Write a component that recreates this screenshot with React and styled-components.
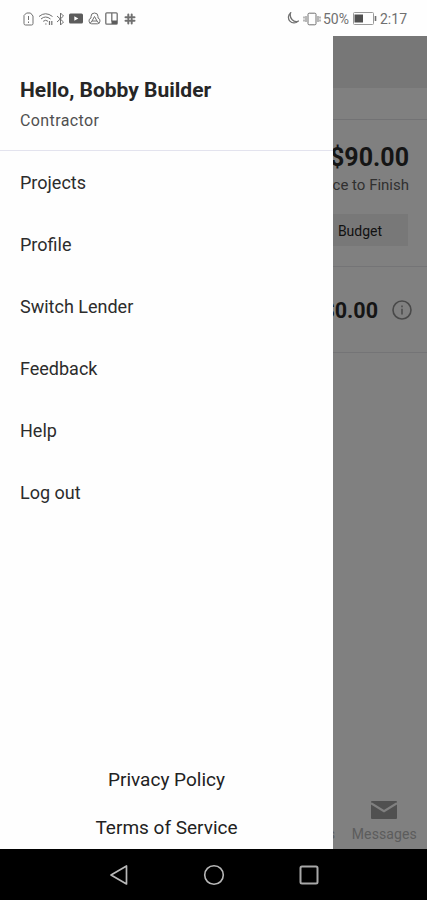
import styled, { createGlobalStyle } from 'styled-components';

const menuItems = ['Projects', 'Profile', 'Switch Lender', 'Feedback', 'Help', 'Log out'];

const StatusBar = () => {
  return (
    <SStatusBar>
      <SIcon $w={11} $h={14} $ml={23} viewBox="0 0 11 14">
        <path d="M3.5 1H7.5L10 4V11.5Q10 13 8.5 13H2.5Q1 13 1 11.5V3.5Z" />
        <path d="M5.5 4V8M5.5 9.5V11" />
      </SIcon>
      <SIcon $w={16} $h={14} $ml={4} viewBox="0 0 16 14">
        <path d="M1 4.5Q7.5 -1 14.5 4.5M3 7Q7.5 3 12.5 7M5.2 9.3Q7.7 7.2 10 9.3" />
        <path d="M7.2 12H8.5M11.5 9V13M13.8 9V13" strokeWidth="1.2" />
      </SIcon>
      <SIcon $w={9} $h={14} $ml={2} viewBox="0 0 9 14">
        <path d="M1 4L7.5 10L4.5 13V1L7.5 4L1 10" />
      </SIcon>
      <SIcon $w={14} $h={11} $ml={4} viewBox="0 0 14 11">
        <rect x="0" y="0.5" width="14" height="10" rx="1.5" fill="#5c5c5c" stroke="none" />
        <path d="M5.3 3.2L9.3 5.5L5.3 7.8Z" fill="#fff" stroke="none" />
      </SIcon>
      <SIcon $w={13} $h={13} $ml={5} viewBox="0 0 13 13">
        <path d="M3 6V4.5A3.5 3.5 0 0 1 10 4.5V6M3 6A3 3 0 0 0 3.5 11.8H9.5A3 3 0 0 0 10 6" />
        <path d="M6.5 4.5L9 9H4ZM4 9L2 11.5M9 9L11 11.5" />
      </SIcon>
      <SIcon $w={13} $h={13} $ml={4} viewBox="0 0 13 13">
        <rect x="0.8" y="0.8" width="11.4" height="11.4" rx="1" strokeWidth="1.3" />
        <path d="M6.8 1V9.5" strokeWidth="1.3" />
        <rect x="6.5" y="8.5" width="5.5" height="3.5" fill="#5c5c5c" stroke="none" />
      </SIcon>
      <SIcon $w={12} $h={12} $ml={6} viewBox="0 0 12 12">
        <path d="M4.3 1.5V6M7.7 6V10.5M1.5 7.7H6M6 4.3H10.5M4.3 9.2V10.5M7.7 1.5V2.8M1.5 4.3H2.8M9.2 7.7H10.5" strokeWidth="2" strokeLinecap="round" />
      </SIcon>
      <SStatusRight>
        <SIcon $w={13} $h={13} viewBox="0 0 13 13">
          <path d="M4.5 1A5.6 5.6 0 1 0 12 9.3Q8.5 10.3 6 7.5Q3.5 4.5 4.5 1Z" strokeWidth="1.3" />
        </SIcon>
        <SIcon $w={18} $h={14} $ml={4} viewBox="0 0 18 14">
          <rect x="5" y="1.2" width="8" height="11.6" rx="1.2" />
          <path d="M3 4V10M15 4V10M1 4.5V6.5M1 7.5V9.5M17 4.5V6.5M17 7.5V9.5" />
        </SIcon>
        <SStatusText $w={27} $ml={2}>50%</SStatusText>
        <SIcon $w={24} $h={13} $ml={3} viewBox="0 0 24 13">
          <rect x="0.5" y="0.5" width="20" height="12" rx="1" stroke="#9a9a9a" />
          <rect x="1.5" y="2.5" width="8.5" height="8" fill="#505050" stroke="none" />
          <path d="M22.5 4V9" strokeWidth="1.6" />
        </SIcon>
        <SStatusText $w={28} $ml={3}>2:17</SStatusText>
      </SStatusRight>
    </SStatusBar>
  );
}

const ProjectPage = () => {
  return (
    <SPage>
      <SPageHeader />
      <SPageStrip />
      <SSummary>
        <SAmount>$90.00</SAmount>
        <SCaption>Balance to Finish</SCaption>
        <SBudgetButton>Budget</SBudgetButton>
      </SSummary>
      <STotalRow>
        <STotal>$0.00</STotal>
        <SIcon $w={20} $h={20} $color="#494949" viewBox="0 0 20 20">
          <circle cx="10" cy="10" r="9" strokeWidth="1.6" />
          <path d="M10 8.8V14.5M10 5.5V7.2" strokeWidth="1.5" />
        </SIcon>
      </STotalRow>
      <STabBar>
        <STab>Documents</STab>
        <STab>
          <SMail viewBox="0 0 26 18">
            <rect width="26" height="18" rx="1" fill="#505050" />
            <path d="M0 2.2L13 10.3L26 2.2" fill="none" stroke="#808080" strokeWidth="2.2" />
          </SMail>
          Messages
        </STab>
      </STabBar>
    </SPage>
  );
}

const Drawer = () => {
  return (
    <SDrawer>
      <SProfile>
        <SName>Hello, Bobby Builder</SName>
        <SRole>Contractor</SRole>
      </SProfile>
      <SMenu>
        {menuItems.map((item) => (
          <SMenuItem key={item}>{item}</SMenuItem>
        ))}
      </SMenu>
      <SLegal>
        <SLegalLink>Privacy Policy</SLegalLink>
        <SLegalLink>Terms of Service</SLegalLink>
      </SLegal>
    </SDrawer>
  );
}

const NavigationBar = () => {
  return (
    <SNavigation>
      <SIcon $w={20} $h={22} $color="#b8b8b8" viewBox="0 0 20 22">
        <path d="M3 11L18.5 2V20Z" strokeWidth="1.7" strokeLinejoin="round" />
      </SIcon>
      <SIcon $w={22} $h={22} $color="#b8b8b8" viewBox="0 0 22 22">
        <circle cx="11" cy="11" r="9.3" strokeWidth="1.6" />
      </SIcon>
      <SIcon $w={20} $h={20} $color="#a8a8a8" viewBox="0 0 20 20">
        <rect x="1.5" y="1.5" width="17" height="17" rx="1.5" strokeWidth="2" />
      </SIcon>
    </SNavigation>
  );
}

const App = () => {
  return (
    <>
      <GlobalStyle />
      <SScreen>
        <StatusBar />
        <SBody>
          <ProjectPage />
          <Drawer />
        </SBody>
        <NavigationBar />
      </SScreen>
    </>
  );
}

export default App;

const GlobalStyle = createGlobalStyle`
  * {
    box-sizing: border-box;
  }
  body {
    margin: 0;
    font-family: Roboto, "Liberation Sans", sans-serif;
  }
`
const SScreen = styled.div`
  display: grid;
  grid-template-rows: 36px 813px 51px;
  width: 427px;
  height: 900px;
  overflow: hidden;
  background: #fefefe;
`
const SIcon = styled.svg`
  flex: none;
  width: ${({ $w }) => $w}px;
  height: ${({ $h }) => $h}px;
  margin-left: ${({ $ml }) => $ml || 0}px;
  fill: none;
  stroke: ${({ $color }) => $color || '#707070'};
`
const SStatusBar = styled.header`
  display: flex;
  align-items: center;
  padding: 1px 19px 0 0;
`
const SStatusRight = styled.div`
  display: flex;
  align-items: center;
  margin-left: auto;
`
const SStatusText = styled.span`
  width: ${({ $w }) => $w}px;
  margin-left: ${({ $ml }) => $ml}px;
  color: #707070;
  font-size: 14px;
  line-height: 16px;
  white-space: nowrap;
`
const SBody = styled.div`
  position: relative;
  display: grid;
`
const SPage = styled.main`
  display: flex;
  flex-direction: column;
  background: #808080;
`
const SPageHeader = styled.div`
  height: 52px;
  background: #777777;
`
const SPageStrip = styled.div`
  height: 32px;
  border-bottom: 1px solid #727274;
`
const SSummary = styled.section`
  display: flex;
  flex-direction: column;
  align-items: flex-end;
  height: 147px;
  padding: 23px 18px 0 0;
  border-bottom: 1px solid #747476;
`
const SAmount = styled.div`
  color: #151515;
  font-size: 25px;
  font-weight: 700;
  line-height: 30px;
`
const SCaption = styled.div`
  color: #303030;
  font-size: 15px;
  line-height: 24px;
`
const SBudgetButton = styled.button`
  width: 96px;
  height: 32px;
  margin: 17px 1px 0 0;
  padding: 2px 0 0;
  border: 0;
  background: #787878;
  color: #111111;
  font-family: inherit;
  font-size: 14px;
`
const STotalRow = styled.section`
  display: flex;
  align-items: center;
  justify-content: flex-end;
  gap: 14px;
  height: 86px;
  padding-right: 15px;
  border-bottom: 1px solid #747476;
`
const STotal = styled.div`
  padding-top: 2px;
  color: #151515;
  font-size: 21.5px;
  font-weight: 700;
`
const STabBar = styled.nav`
  display: flex;
  justify-content: flex-end;
  height: 56px;
  margin-top: auto;
`
const STab = styled.div`
  display: flex;
  flex-direction: column;
  align-items: center;
  justify-content: flex-end;
  width: 85.4px;
  padding-bottom: 6px;
  color: #5c5c5c;
  font-size: 14px;
  line-height: 18px;
  letter-spacing: 0.1px;
`
const SMail = styled.svg`
  width: 26px;
  height: 18px;
  margin-bottom: 6px;
`
const SDrawer = styled.aside`
  position: absolute;
  top: 0;
  bottom: 0;
  left: 0;
  display: flex;
  flex-direction: column;
  width: 333px;
  background: #fefefe;
`
const SProfile = styled.div`
  height: 115px;
  padding: 40px 20px 0;
  border-bottom: 1px solid #e3e3ee;
`
const SName = styled.div`
  color: #262626;
  font-size: 21px;
  font-weight: 700;
  line-height: 28px;
`
const SRole = styled.div`
  margin-top: 5px;
  color: #505050;
  font-size: 16px;
  line-height: 24px;
  letter-spacing: 0.4px;
`
const SMenu = styled.ul`
  margin: 0;
  padding: 1px 0 0;
  list-style: none;
`
const SMenuItem = styled.li`
  height: 62px;
  padding-left: 20px;
  color: #2c2c2c;
  font-size: 18px;
  line-height: 62px;
`
const SLegal = styled.div`
  display: flex;
  flex-direction: column;
  align-items: center;
  margin-top: auto;
`
const SLegalLink = styled.a`
  height: 47.5px;
  color: #222222;
  font-size: 19px;
  line-height: 52px;
`
const SNavigation = styled.footer`
  display: flex;
  align-items: center;
  justify-content: space-between;
  padding: 0 108px;
  background: #000000;
`
